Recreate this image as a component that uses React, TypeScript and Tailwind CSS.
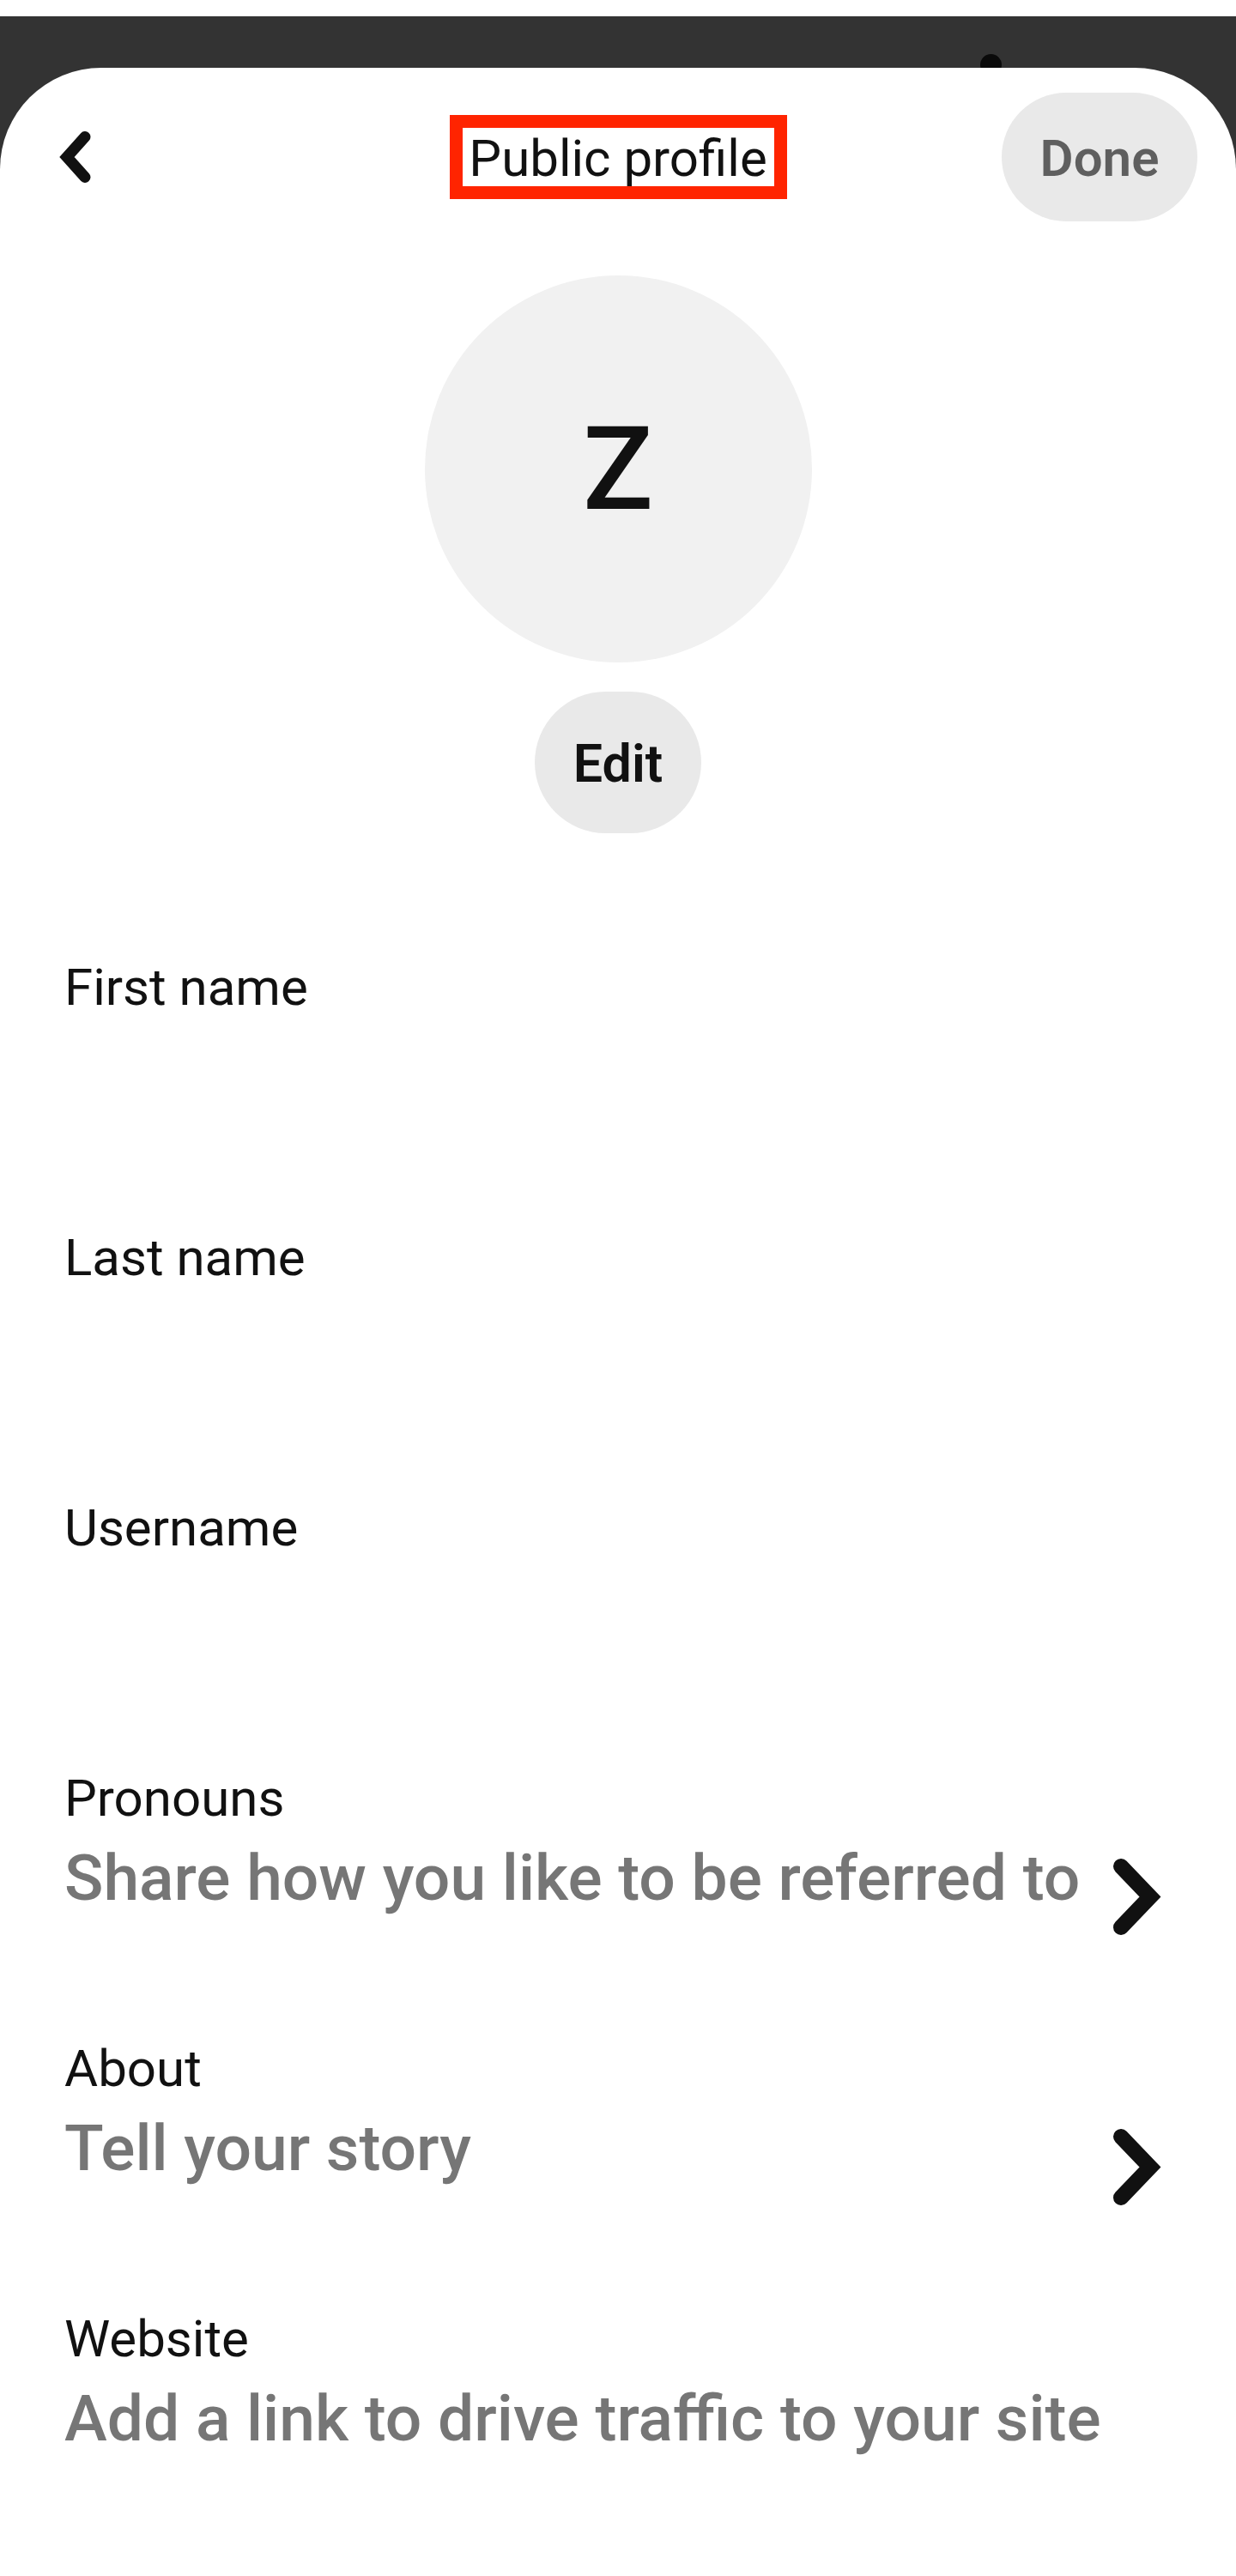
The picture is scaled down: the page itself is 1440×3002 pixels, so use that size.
const fields = [
    { label: "First name", value: "", arrow: false },
    { label: "Last name", value: "", arrow: false },
    { label: "Username", value: "", arrow: false },
    { label: "Pronouns", value: "Share how you like to be referred to", arrow: true },
    { label: "About", value: "Tell your story", arrow: true },
    { label: "Website", value: "Add a link to drive traffic to your site", arrow: false },
]

function ChevronRight() {
    return (
        <svg width="56" height="89" viewBox="0 0 56 89" fill="none">
            <path d="M9 9 L43 44.5 L9 80" stroke="#111111" strokeWidth="18" strokeLinecap="round" strokeLinejoin="miter" />
        </svg>
    )
}

export default function App() {
    return (
        <div className="min-h-[3002px] w-[1440px] bg-white pt-[19px] font-[Roboto,sans-serif] flex flex-col">
            <div className="relative bg-[#333333] pt-[60px] flex-1 flex flex-col">
                {/* camera hole */}
                <div className="absolute left-[1142px] top-[44px] w-[25px] h-[25px] rounded-full bg-[#0a0a0a]" />

                <div className="relative flex-1 bg-white rounded-t-[118px]">
                    <header className="h-[208px] px-[45px] grid grid-cols-[1fr_auto_1fr] items-center">
                        <button className="justify-self-start ml-[23px]">
                            <svg width="38" height="60" viewBox="0 0 38 60" fill="none">
                                <path d="M31 6.5 L10 30 L31 53.5" stroke="#111111" strokeWidth="13" strokeLinecap="round" strokeLinejoin="miter" />
                            </svg>
                        </button>

                        <div className="w-[393px] h-[98px] border-[15px] border-[#ff2400] flex items-center justify-center pt-[4px]">
                            <h1 className="text-[60px] leading-[70px] text-[#111111] font-normal">Public profile</h1>
                        </div>

                        <button className="justify-self-end w-[228px] h-[150px] rounded-full bg-[#e9e9e9] flex items-center justify-center pt-[4px]">
                            <span className="text-[60px] leading-[70px] font-semibold text-[#5f5f5f]">Done</span>
                        </button>
                    </header>

                    <div className="flex flex-col items-center">
                        <div className="mt-[34px] w-[451px] h-[451px] rounded-full bg-[#f1f1f1] flex items-center justify-center">
                            <span className="text-[136px] leading-none text-[#111111] font-medium">Z</span>
                        </div>

                        <button className="mt-[34px] w-[194px] h-[165px] rounded-full bg-[#e9e9e9] flex items-center justify-center pt-[3px]">
                            <span className="text-[61px] leading-none font-semibold text-[#111111]">Edit</span>
                        </button>
                    </div>

                    <div className="mt-[140px] pl-[75px] pr-[87px] flex flex-col">
                        {fields.map((f) => (
                            <div key={f.label} className="pb-[131px] flex flex-col">
                                <span className="text-[60px] leading-[80px] text-[#111111]">{f.label}</span>
                                <div className="h-[104px] flex items-start justify-between">
                                    <span className="text-[75px] leading-[104px] font-medium text-[#767676] whitespace-nowrap">{f.value}</span>
                                    {f.arrow && (
                                        <div className="mt-[30px]">
                                            <ChevronRight />
                                        </div>
                                    )}
                                </div>
                            </div>
                        ))}
                    </div>
                </div>
            </div>
        </div>
    )
}
